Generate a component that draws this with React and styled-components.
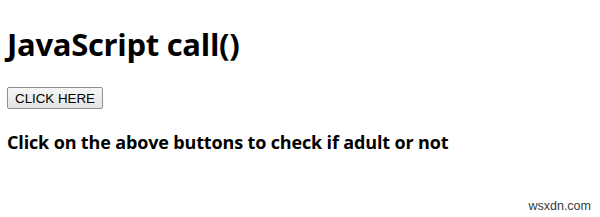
import styled, { createGlobalStyle } from 'styled-components';

const GlobalStyle = createGlobalStyle`
  html, body {
    margin: 0;
    background: #fff;
  }
  body {
    font-family: "Open Sans", "Noto Sans", sans-serif;
    color: #000;
  }
`;

const Page = styled.div`
  position: relative;
  width: 600px;
  height: 217px;
  padding: 0 7px;
  box-sizing: border-box;
  overflow: hidden;
`;

const Title = styled.h1`
  margin: 0;
  padding-top: 26px;
  font-size: 31px;
  line-height: 36px;
  font-weight: 700;
  letter-spacing: -0.3px;
`;

const Button = styled.button`
  margin-top: 25px;
  height: 22px;
  padding: 0 7px;
  font-family: "Liberation Sans", Arial, sans-serif;
  font-size: 13.33px;
  color: #000;
  background: linear-gradient(#f6f6f6, #e4e4e4);
  border: 1px solid #8f8f8f;
  border-radius: 2px;
`;

const Note = styled.h3`
  margin: 0;
  padding-top: 21px;
  font-size: 18px;
  line-height: 24px;
  font-weight: 700;
  letter-spacing: -0.15px;
`;

const Watermark = styled.span`
  position: absolute;
  right: 9px;
  bottom: 4px;
  font-family: "Liberation Sans", Arial, sans-serif;
  font-size: 12.5px;
  color: #3a3a3a;
`;

export default function App() {
  return (
    <>
      <GlobalStyle />
      <Page>
        <Title>JavaScript call()</Title>
        <Button>CLICK HERE</Button>
        <Note>Click on the above buttons to check if adult or not</Note>
        <Watermark>wsxdn.com</Watermark>
      </Page>
    </>
  );
}
